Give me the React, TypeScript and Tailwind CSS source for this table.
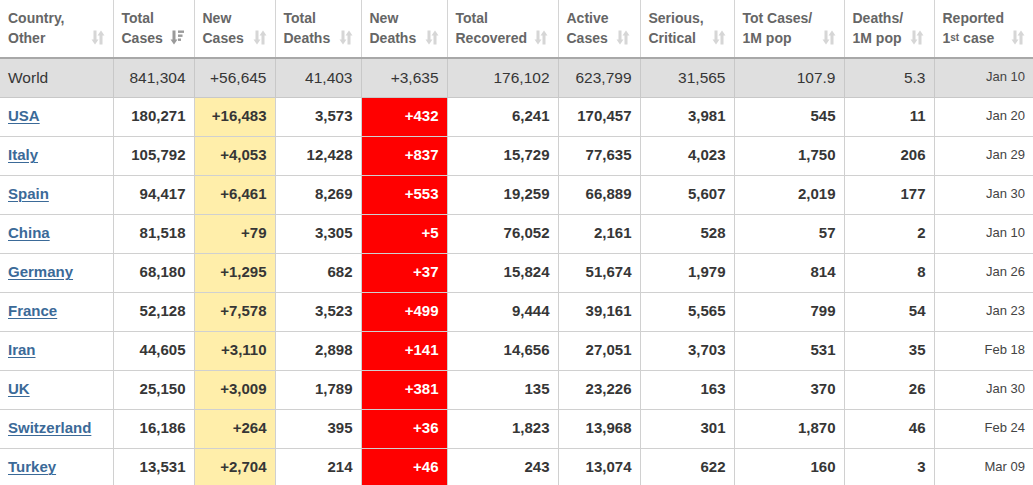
import React from "react";

type Row = {
  c: string;
  v: string[];
  d: string;
};

const rows: Row[] = [
  { c: "USA", v: ["180,271", "+16,483", "3,573", "+432", "6,241", "170,457", "3,981", "545", "11"], d: "Jan 20" },
  { c: "Italy", v: ["105,792", "+4,053", "12,428", "+837", "15,729", "77,635", "4,023", "1,750", "206"], d: "Jan 29" },
  { c: "Spain", v: ["94,417", "+6,461", "8,269", "+553", "19,259", "66,889", "5,607", "2,019", "177"], d: "Jan 30" },
  { c: "China", v: ["81,518", "+79", "3,305", "+5", "76,052", "2,161", "528", "57", "2"], d: "Jan 10" },
  { c: "Germany", v: ["68,180", "+1,295", "682", "+37", "15,824", "51,674", "1,979", "814", "8"], d: "Jan 26" },
  { c: "France", v: ["52,128", "+7,578", "3,523", "+499", "9,444", "39,161", "5,565", "799", "54"], d: "Jan 23" },
  { c: "Iran", v: ["44,605", "+3,110", "2,898", "+141", "14,656", "27,051", "3,703", "531", "35"], d: "Feb 18" },
  { c: "UK", v: ["25,150", "+3,009", "1,789", "+381", "135", "23,226", "163", "370", "26"], d: "Jan 30" },
  { c: "Switzerland", v: ["16,186", "+264", "395", "+36", "1,823", "13,968", "301", "1,870", "46"], d: "Feb 24" },
  { c: "Turkey", v: ["13,531", "+2,704", "214", "+46", "243", "13,074", "622", "160", "3"], d: "Mar 09" },
];

const world = ["841,304", "+56,645", "41,403", "+3,635", "176,102", "623,799", "31,565", "107.9", "5.3"];

const widths = [113, 81, 81, 86, 86, 111, 82, 94, 110, 90, 99];

function SortIcon() {
  return (
    <svg width="14" height="15" viewBox="0 0 14 15" className="shrink-0 block">
      <g fill="#d6d6d6">
        <rect x="2.5" y="0.5" width="3" height="10" />
        <polygon points="0.5,9.5 7.5,9.5 4,14.5" />
        <rect x="8.5" y="4.5" width="3" height="10" />
        <polygon points="6.5,5.5 13.5,5.5 10,0.5" />
      </g>
    </svg>
  );
}

function SortDownIcon() {
  return (
    <svg width="14" height="15" viewBox="0 0 14 15" className="shrink-0 block">
      <g fill="#9a9a9a">
        <rect x="2.5" y="0.5" width="3" height="10" />
        <polygon points="0.5,9.5 7.5,9.5 4,14.5" />
        <rect x="8" y="0.5" width="6" height="2.4" />
        <rect x="8" y="4.5" width="4.5" height="2.4" />
        <rect x="8" y="8.5" width="3" height="2.4" />
      </g>
    </svg>
  );
}

type H = { l1: React.ReactNode; l2: React.ReactNode; active?: boolean; gap?: boolean };
const headers: H[] = [
  { l1: "Country,", l2: "Other" },
  { l1: "Total", l2: "Cases", active: true, gap: true },
  { l1: "New", l2: "Cases" },
  { l1: "Total", l2: "Deaths" },
  { l1: "New", l2: "Deaths" },
  { l1: "Total", l2: "Recovered", gap: true },
  { l1: "Active", l2: "Cases", gap: true },
  { l1: "Serious,", l2: "Critical" },
  { l1: "Tot Cases/", l2: "1M pop" },
  { l1: "Deaths/", l2: "1M pop", gap: true },
  {
    l1: "Reported",
    l2: (
      <span>
        1<sup className="text-[10px] relative -top-[2px]">st</sup> case
      </span>
    ),
  },
];

export default function App() {
  return (
    <div
      className="w-[1033px] h-[485px] overflow-hidden bg-white"
      style={{ fontFamily: '"Liberation Sans", Arial, sans-serif' }}
    >
      <table className="table-fixed border-collapse w-[1033px]">
        <colgroup>
          {widths.map((w, i) => (
            <col key={i} style={{ width: w }} />
          ))}
        </colgroup>
        <thead>
          <tr className="h-[58px]">
            {headers.map((h, i) => (
              <th
                key={i}
                className={`border-l border-[#d4d4d4] first:border-l-0 border-b-2 border-b-[#a8a8a8] px-2 pt-[8px] pb-[8px] text-left align-top font-bold text-[14px] leading-[20px] text-[#666]`}
              >
                <div className={`flex items-end ${h.gap ? "gap-[7px]" : "justify-between"}`}>
                  <div className="whitespace-nowrap">
                    <div>{h.l1}</div>
                    <div>{h.l2}</div>
                  </div>
                  <div className="pb-[3px]">{h.active ? <SortDownIcon /> : <SortIcon />}</div>
                </div>
              </th>
            ))}
          </tr>
        </thead>
        <tbody>
          <tr className="h-[39px] bg-[#dfdfdf] text-[15.5px] text-[#363636]">
            <td className="px-2 text-left border-b border-[#c8c8c8]">World</td>
            {world.map((v, i) => (
              <td key={i} className="px-2 text-right border-l border-b border-[#c8c8c8]">
                {v}
              </td>
            ))}
            <td className="px-2 text-right border-l border-b border-[#c8c8c8] text-[13px] align-top pt-[8px] text-[#444]">
              Jan 10
            </td>
          </tr>
          {rows.map((r) => (
            <tr key={r.c} className="h-[39px] text-[15px] font-bold text-[#363636]">
              <td className="px-2 text-left border-b border-[#d0d0d0]">
                <a className="text-[#3b6a98] underline underline-offset-[2px] decoration-1">{r.c}</a>
              </td>
              {r.v.map((v, i) => {
                const bg =
                  i === 1
                    ? "bg-[#ffeeaa]"
                    : i === 3
                    ? "bg-[#ff0000] text-white"
                    : "";
                return (
                  <td key={i} className={`px-2 text-right border-l border-b border-[#d0d0d0] ${bg}`}>
                    {v}
                  </td>
                );
              })}
              <td className="px-2 text-right border-l border-b border-[#d0d0d0] text-[13px] font-normal align-top pt-[8px] text-[#444]">
                {r.d}
              </td>
            </tr>
          ))}
        </tbody>
      </table>
    </div>
  );
}
